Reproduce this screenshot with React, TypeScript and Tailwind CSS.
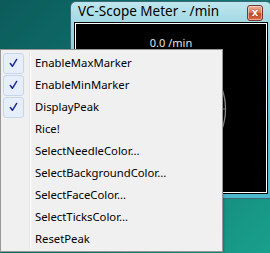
import React from 'react';

const items = [
  { label: 'EnableMaxMarker', checked: true },
  { label: 'EnableMinMarker', checked: true },
  { label: 'DisplayPeak', checked: true },
  { label: 'Rice!' },
  { label: 'SelectNeedleColor...' },
  { label: 'SelectBackgroundColor...' },
  { label: 'SelectFaceColor...' },
  { label: 'SelectTicksColor...' },
  { label: 'ResetPeak' },
];

function Check() {
  return (
    <svg width="21" height="21" viewBox="0 0 21 21">
      <path d="M7 10.5 L9.3 13.6 L14 6" fill="none" stroke="#1a2790" strokeWidth="1.6" strokeLinecap="round" strokeLinejoin="round" />
    </svg>
  );
}

export default function App() {
  return (
    <div className="relative w-[270px] h-[253px] overflow-hidden bg-[linear-gradient(135deg,#0b5c5b_0%,#0f6e6a_35%,#138378_65%,#19a08c_100%)] font-['Noto_Sans',sans-serif]">
      {/* meter window */}
      <div className="absolute left-[70px] top-[1px] w-[202px] h-[198px] rounded-t-[6px] border border-[#3b6b78] bg-[linear-gradient(180deg,#bfe6ee_0%,#9ed7e2_12%,#6fc6d6_45%,#4cb9cc_100%)] px-[3px] pb-[4px] flex flex-col">
        <div className="h-[20px] flex items-center justify-between pl-[4px] pr-[5px]">
          <span className="text-[13.5px] text-black leading-none">VC-Scope Meter - /min</span>
          <div className="w-[16px] h-[16px] rounded-[3px] border border-[#7a3324] bg-[linear-gradient(180deg,#eeb09c_0%,#dc7a5f_45%,#c7452a_55%,#d8694a_100%)] flex items-center justify-center shadow-[inset_0_0_0_1px_rgba(255,255,255,0.45)] mt-[1px]">
            <span className="text-white text-[10px] font-bold leading-none font-['DejaVu_Sans',sans-serif] [text-shadow:0_0_1px_#5a1a10]">x</span>
          </div>
        </div>
        <div className="flex-1 border border-black">
          <div className="h-full border border-white bg-black relative">
            <div className="pt-[13px] text-center text-[11px] leading-none text-[#e4e4e4]">0.0 /min</div>
            <svg className="absolute left-0 top-0" width="188" height="170" viewBox="0 0 188 170">
              <circle cx="93" cy="85" r="56.5" fill="none" stroke="#8a8a8a" strokeWidth="1.3" />
              <line x1="146" y1="85" x2="150" y2="85" stroke="#8a8a8a" strokeWidth="1" />
            </svg>
          </div>
        </div>
      </div>

      {/* context menu */}
      <div className="absolute left-0 top-[49px] w-[223px] h-[203px] border border-[#979797] bg-[#f0f0f0] p-[2px] shadow-[1px_1px_2px_rgba(0,0,0,0.2)]">
        <div className="absolute left-[28px] top-[2px] bottom-[2px] w-[2px] border-l border-[#e2e3e3]">
          <div className="w-px h-full bg-white" />
        </div>
        {items.map((it) => (
          <div key={it.label} className="relative h-[22px] flex items-center">
            <div className="w-[30px] h-full flex items-center">
              {it.checked && (
                <div className="w-[21px] h-[21px] rounded-[3px] border border-[#c5d6ec] bg-[#e6eef9] flex items-center justify-center">
                  <Check />
                </div>
              )}
            </div>
            <span className="pl-[2px] text-[11.3px] leading-none text-black">{it.label}</span>
          </div>
        ))}
      </div>
    </div>
  );
}
